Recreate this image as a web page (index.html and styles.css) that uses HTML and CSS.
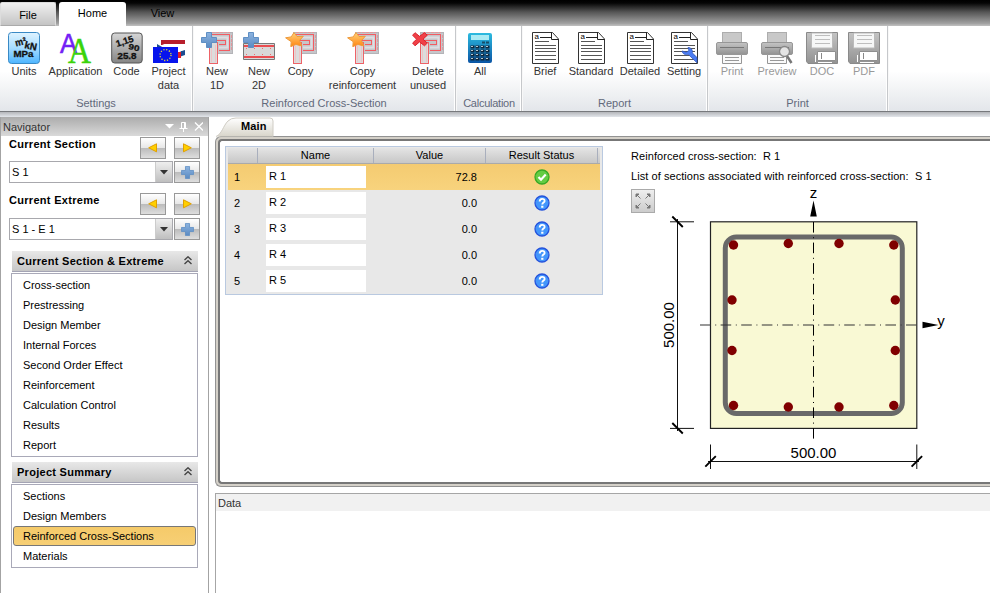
FILE: index.html
```html
<!DOCTYPE html>
<html lang="en">
<head>
<meta charset="utf-8">
<title>Reinforced Cross-Sections</title>
<link rel="stylesheet" href="styles.css">
</head>
<body>
<svg class="defs" width="0" height="0" aria-hidden="true">
  <defs>
    <linearGradient id="blueBtn" x2="0" y2="1"><stop offset="0" stop-color="#dff3ff"/><stop offset=".5" stop-color="#a6dcff"/><stop offset="1" stop-color="#4db5ff"/></linearGradient>
    <linearGradient id="greyBtn" x2="0" y2="1"><stop offset="0" stop-color="#d6d6d6"/><stop offset="1" stop-color="#858585"/></linearGradient>
    <linearGradient id="calc" x2="0" y2="1"><stop offset="0" stop-color="#2cbbe0"/><stop offset="1" stop-color="#0a55a5"/></linearGradient>
    <linearGradient id="printer" x2="0" y2="1"><stop offset="0" stop-color="#c4c4c4"/><stop offset="1" stop-color="#929292"/></linearGradient>
    <linearGradient id="plusFill" x2="0" y2="1"><stop offset="0" stop-color="#8db4e0"/><stop offset="1" stop-color="#5a8ac2"/></linearGradient>
    <linearGradient id="starFill" x2="0" y2="1"><stop offset="0" stop-color="#ffd27a"/><stop offset="1" stop-color="#ff8410"/></linearGradient>
    <symbol id="beam" viewBox="0 0 32 32">
      <rect x="8.500" y=".5" width="23" height="21" fill="#c6c6ca" stroke="#b4b4b8"/>
      <path d="M11 2.500h18M28.500 3v16M18 18.500h11M9 8.500h15M18 12.500h7M24.500 8v5" fill="none" stroke="#f25c62"/>
      <path d="M12 5.500h14.500v10H18" fill="none" stroke="#dedee2" stroke-width="2"/>
      <path d="M11 .5h18M30.500 3v16" stroke="#e3979b" fill="none" stroke-dasharray="3 1"/>
      <rect x="8.500" y="10.500" width="8" height="21" fill="#dcdcdc" stroke="#ee6267"/>
      <path d="M10.500 13v17M14.500 13v17" stroke="#eec4c6"/>
    </symbol>
    <symbol id="plus" viewBox="0 0 16 16"><path d="M5.500.5h5v5h5v5h-5v5h-5v-5h-5v-5h5z" fill="url(#plusFill)" stroke="#5f8fc4"/></symbol>
    <symbol id="star" viewBox="0 0 19 15"><path d="M9 .5l3 4 6.300-.2-3.800 4.200 2.300 5.500-6-1.600-5 2.300.4-5L.6 5.800l5.600-.9z" fill="url(#starFill)" stroke="#ee9a3c"/></symbol>
    <symbol id="doc" viewBox="0 0 27 32">
      <path d="M.5.5h20L26.500 7v24.500H.5z" fill="#fff" stroke="#333"/>
      <path d="M19.500.5v7h7M8 5.500h11" fill="none" stroke="#222"/>
      <path d="M3 9.500h14M3 13.500h21M3 16.500h21M3 19.500h21M3 23.500h21M3 27.500h21" stroke="#555"/>
      <text x="2.500" y="6.800" font-size="8">a</text>
    </symbol>
    <symbol id="print" viewBox="0 0 32 32">
      <rect x="6.500" y=".5" width="19" height="12" fill="#c8c8c8" stroke="#adadad"/>
      <rect x=".5" y="10.500" width="31" height="12" rx="1.500" fill="url(#printer)" stroke="#979797"/>
      <path d="M4 15.500h24" stroke="#777"/>
      <path d="M6.500 22.500h19v9h-19z" fill="#fafafa" stroke="#969696"/>
      <path d="M9 25.500h14M9 28.500h14" stroke="#999"/>
    </symbol>
    <symbol id="floppy" viewBox="0 0 32 32">
      <path d="M.5.5h31v31H2l-1.500-2z" fill="url(#printer)" stroke="#8a8a8a"/>
      <path d="M5.500 1h21v15h-21z" fill="#f6f7f7" stroke="#bbb"/>
      <path d="M9 3.500h15M9 7.500h15M9 11.500h15" stroke="#bebebe"/>
      <path d="M11.500 19.500h18v9h-18z" fill="#fff" stroke="#8f8f8f"/>
      <path d="M9.500 23v7M12 30.500h14" stroke="#fff"/><path d="M15.500 21v6" stroke="#888"/>
    </symbol>
    <symbol id="ok" viewBox="0 0 16 16"><circle cx="8" cy="8" r="7" fill="#65cc43" stroke="#36a925" stroke-width="1.300"/><path d="M4.500 8l2.500 2.700 4.700-5.200" fill="none" stroke="#fff" stroke-width="2.200"/></symbol>
    <symbol id="ask" viewBox="0 0 16 16"><circle cx="8" cy="8" r="7" fill="#4396fb" stroke="#2553dc" stroke-width="1.300"/><path d="M5.700 6.500c0-3.500 4.900-3.300 4.900-.6 0 1.700-2.300 1.700-2.300 3.600" fill="none" stroke="#fff" stroke-width="1.900"/><path d="M7.200 10.800h2.200v2H7.200z" fill="#fff"/></symbol>
    <symbol id="chev" viewBox="0 0 8 9"><path d="M.5 4L4 .8 7.500 4M.5 8L4 4.800 7.500 8" fill="none" stroke="#444" stroke-width="1.400"/></symbol>
  </defs>
</svg>

<nav class="tabs">
  <div class="tab file">File</div>
  <div class="tab home">Home</div>
  <div class="tab view">View</div>
</nav>

<header class="ribbon">
  <section class="group g-settings">
    <div class="tools">
      <div class="tool w40"><svg width="32" height="32"><rect x=".5" y=".5" width="31" height="31" rx="3" fill="url(#blueBtn)" stroke="#3989c5"/><g class="heavy" fill="#111"><text x="8" y="14.500" font-size="10" transform="rotate(-14 8 14)" textLength="11" lengthAdjust="spacingAndGlyphs">m²</text><text x="16" y="16" font-size="10" transform="rotate(12 16 16)" textLength="12.500" lengthAdjust="spacingAndGlyphs">kN</text><text x="5.500" y="25" font-size="9" textLength="20" lengthAdjust="spacingAndGlyphs">MPa</text></g></svg><span>Units</span></div>
      <div class="tool w63"><svg class="letters" width="32" height="32"><text x="0" y="20.500" font-size="28" textLength="17" lengthAdjust="spacingAndGlyphs" fill="#7320f5" stroke="#7320f5" stroke-width=".6">A</text><text class="serif" x="8" y="31" font-size="35" textLength="23" lengthAdjust="spacingAndGlyphs" fill="#3ad30a" stroke="#3ad30a" stroke-width=".5">A</text></svg><span>Application</span></div>
      <div class="tool w39"><svg width="32" height="32"><rect x=".7" y="1" width="30.500" height="30" rx="3" fill="url(#greyBtn)" stroke="#555"/><g class="heavy" fill="#111"><text x="6" y="15" font-size="9" transform="rotate(-18 6 15)" textLength="18" lengthAdjust="spacingAndGlyphs">1,15</text><text x="17" y="17" font-size="8" transform="rotate(12 17 17)" textLength="11" lengthAdjust="spacingAndGlyphs">90</text><text x="6.500" y="26.500" font-size="8.500" textLength="19" lengthAdjust="spacingAndGlyphs">25.8</text></g></svg><span>Code</span></div>
      <div class="tool w45"><svg width="32" height="32"><path d="M8 8h24v5H8z" fill="#b71e2c"/><path d="M4 12l6 3.500H4zM26 20l6-3v6l-6 2z" fill="#1d4d91"/><path d="M9 12h23v6l-7 2v8h3v-8" fill="#fff"/><path d="M25 20h3v6h-3z" fill="#e21b25"/><path d="M28 19h4v4h-4z" fill="#1d4d91"/><path d="M0 15h25v16H0z" fill="#0714ed"/><circle cx="12.500" cy="23" r="5.500" fill="none" stroke="#e8df30" stroke-width="1.300" stroke-dasharray="1.200 1.680"/></svg><span>Project<br>data</span></div>
    </div>
    <h2>Settings</h2>
  </section>
  <section class="group g-rcs">
    <div class="tools">
      <div class="tool w42"><svg width="32" height="32"><use href="#beam" width="32" height="32"/><use href="#plus" width="16" height="16"/></svg><span>New<br>1D</span></div>
      <div class="tool w42"><svg width="32" height="32"><path d="M.5 11.500h31v16H.5z" fill="#d8d8d8" stroke="#777"/><path d="M1 14h30M1 25h30" stroke="#f01f25" stroke-width="1.300"/><path d="M1 16.500h30M1 22.500h30" stroke="#f06a6c" stroke-dasharray="1 7" stroke-dashoffset="-2"/><use href="#plus" width="16" height="16"/></svg><span>New<br>2D</span></div>
      <div class="tool w41"><svg width="32" height="32"><use href="#beam" width="32" height="32"/><use href="#star" width="19" height="15"/></svg><span>Copy</span></div>
      <div class="tool w83"><svg width="32" height="32"><use href="#beam" width="32" height="32"/><use href="#star" width="19" height="15"/></svg><span>Copy<br>reinforcement</span></div>
      <div class="tool w48"><svg width="32" height="32"><use href="#beam" width="32" height="32"/><path d="M3 .7l4.500 3.600L12.500.7l2.800 2.500L11 7.200l4.300 3.900-2.800 2.700-5-3.900L3 13.800.6 11l4-3.700L.6 3.200z" fill="#f04047" stroke="#d9252e"/></svg><span>Delete<br>unused</span></div>
    </div>
    <h2>Reinforced Cross-Section</h2>
  </section>
  <section class="group g-calc">
    <div class="tools">
      <div class="tool w40"><svg width="24" height="32"><rect y="1" width="24" height="30" rx="2" fill="url(#calc)"/><path d="M3 3h18v5H3z" fill="#a9eaf4"/><path d="M14 10.500h7" stroke="#174d68" stroke-width="2" stroke-dasharray="3 1"/><path d="M2.500 15h19M2.500 19h19M2.500 23h19M2.500 27h19" stroke="#10283d" stroke-width="3" stroke-dasharray="4 1"/><path d="M3 14.500h18M3 18.500h18M3 22.500h18M3 26.500h18" stroke="#b8c7cf" stroke-dasharray="2 3"/></svg><span>All</span></div>
    </div>
    <h2>Calculation</h2>
  </section>
  <section class="group g-report">
    <div class="tools">
      <div class="tool w40"><svg width="27" height="32"><use href="#doc"/></svg><span>Brief</span></div>
      <div class="tool w52"><svg width="27" height="32"><use href="#doc"/></svg><span>Standard</span></div>
      <div class="tool w46"><svg width="27" height="32"><use href="#doc"/></svg><span>Detailed</span></div>
      <div class="tool w42"><svg width="27" height="32"><use href="#doc"/><path d="M17 15.500c3 0 5 2.500 4.200 5.300L26 25.500v5.300l-8.500-8.200c-3.200.9-6-.9-6.500-3.600l4.500 1.200 2.500-1.800z" fill="#4b7df3" stroke="#2f55bb" stroke-width=".8"/></svg><span>Setting</span></div>
    </div>
    <h2>Report</h2>
  </section>
  <section class="group g-print">
    <div class="tools disabled">
      <div class="tool w48"><svg width="32" height="32"><use href="#print"/></svg><span>Print</span></div>
      <div class="tool w42"><svg width="32" height="32"><use href="#print"/><path d="M26 24l4.500 7" stroke="#777" stroke-width="2.500"/><circle cx="23.500" cy="19.500" r="5" fill="#e4e4e4" stroke="#888" stroke-width="1.300"/></svg><span>Preview</span></div>
      <div class="tool w48"><svg width="32" height="32"><use href="#floppy"/></svg><span>DOC</span></div>
      <div class="tool w36"><svg width="32" height="32"><use href="#floppy"/></svg><span>PDF</span></div>
    </div>
    <h2>Print</h2>
  </section>
</header>
<div class="ribbon-shadow"></div>

<div class="workspace">
  <aside class="navigator">
    <div class="nav-title"><span>Navigator</span>
      <svg width="38" height="12"><path d="M0 3h9l-4.500 4.500z" fill="#fff"/><path d="M16.500 1.500h4v6h-4zM14.500 7.500h8M18.500 8v3" fill="none" stroke="#fff"/><path d="M19.500 2v5" stroke="#fff"/><path d="M30 1.500l8 8M38 1.500l-8 8" stroke="#fff" stroke-width="1.300"/></svg>
    </div>
    <div class="picker">
      <div class="picker-head"><b>Current Section</b>
        <button class="btn"><svg width="10" height="10"><path d="M8.500.8v8L.7 4.800z" fill="#ffcf00" stroke="#e0a000"/></svg></button>
        <button class="btn"><svg width="10" height="10"><path d="M1.500.8v8l7.800-4z" fill="#ffcf00" stroke="#e0a000"/></svg></button>
      </div>
      <div class="picker-row"><div class="combo"><span>S 1</span><i><svg width="8" height="5"><path d="M0 0h8L4 4.500z" fill="#333"/></svg></i></div>
        <button class="btn"><svg width="13" height="13"><use href="#plus"/></svg></button></div>
    </div>
    <div class="picker">
      <div class="picker-head"><b>Current Extreme</b>
        <button class="btn"><svg width="10" height="10"><path d="M8.500.8v8L.7 4.800z" fill="#ffcf00" stroke="#e0a000"/></svg></button>
        <button class="btn"><svg width="10" height="10"><path d="M1.500.8v8l7.800-4z" fill="#ffcf00" stroke="#e0a000"/></svg></button>
      </div>
      <div class="picker-row"><div class="combo"><span>S 1 - E 1</span><i><svg width="8" height="5"><path d="M0 0h8L4 4.500z" fill="#333"/></svg></i></div>
        <button class="btn"><svg width="13" height="13"><use href="#plus"/></svg></button></div>
    </div>
    <div class="accordion">
      <h3>Current Section &amp; Extreme<svg width="8" height="9"><use href="#chev"/></svg></h3>
      <ul>
        <li>Cross-section</li><li>Prestressing</li><li>Design Member</li><li>Internal Forces</li><li>Second Order Effect</li><li>Reinforcement</li><li>Calculation Control</li><li>Results</li><li>Report</li>
      </ul>
    </div>
    <div class="accordion summary">
      <h3>Project Summary<svg width="8" height="9"><use href="#chev"/></svg></h3>
      <ul>
        <li>Sections</li><li>Design Members</li><li class="active">Reinforced Cross-Sections</li><li>Materials</li>
      </ul>
    </div>
  </aside>

  <main class="content">
    <div class="main-tab">
      <svg width="60" height="20"><defs><linearGradient id="tabFill" x2="0" y2="1"><stop offset="0" stop-color="#fff"/><stop offset="1" stop-color="#d8d5ca"/></linearGradient></defs><path d="M1 19.500C7 17 8 9 13 4q3-3 8-3h34q3 0 3 3v15.500" fill="url(#tabFill)" stroke="#cfccc4"/></svg>
      <b>Main</b>
    </div>
    <div class="frame"><div class="panel">
      <div class="grid">
        <div class="row head"><span></span><span>Name</span><span>Value</span><span>Result Status</span><span></span></div>
        <div class="row selected"><span>1</span><span><em>R 1</em></span><span>72.8</span><span><svg width="16" height="16"><use href="#ok"/></svg></span></div>
        <div class="row"><span>2</span><span><em>R 2</em></span><span>0.0</span><span><svg width="16" height="16"><use href="#ask"/></svg></span></div>
        <div class="row"><span>3</span><span><em>R 3</em></span><span>0.0</span><span><svg width="16" height="16"><use href="#ask"/></svg></span></div>
        <div class="row"><span>4</span><span><em>R 4</em></span><span>0.0</span><span><svg width="16" height="16"><use href="#ask"/></svg></span></div>
        <div class="row"><span>5</span><span><em>R 5</em></span><span>0.0</span><span><svg width="16" height="16"><use href="#ask"/></svg></span></div>
      </div>
      <div class="viewer">
        <p>Reinforced cross-section:&nbsp; R 1</p>
        <p class="list">List of sections associated with reinforced cross-section:&nbsp; S 1</p>
        <div class="canvas">
          <button class="fit"><svg width="16" height="16" fill="#777" stroke="#777" stroke-width="1.300"><path d="M1 1h3L1 4zM2 2l3.500 3.500M15 1v3l-3-3zM14 2l-3.500 3.500M1 15v-3l3 3zM2 14l3.500-3.500M15 15h-3l3-3zM14 14l-3.500-3.500" stroke-width="1"/></svg></button>
          <svg class="drawing" width="335" height="289" viewBox="655 186 335 289">
            <rect x="710.500" y="221.800" width="206.300" height="206.600" fill="#f9f9d4" stroke="#222" stroke-width="1.200"/>
            <rect x="725.300" y="237" width="177" height="176.500" rx="11" fill="none" stroke="#696969" stroke-width="5"/>
            <path d="M813.500 222v217" stroke="#000" stroke-dasharray="10.600 4.600 1 4.400"/>
            <path d="M700 325h218" stroke="#333" stroke-width="1.200" stroke-dasharray="10.600 4.600 1 4.400"/>
            <g fill="#800000">
              <circle cx="733.500" cy="245" r="4.700"/><circle cx="788.300" cy="243.500" r="4.700"/><circle cx="839" cy="243.500" r="4.700"/><circle cx="893.800" cy="245" r="4.700"/>
              <circle cx="732" cy="300" r="4.700"/><circle cx="895.300" cy="300" r="4.700"/><circle cx="732" cy="350.500" r="4.700"/><circle cx="895.300" cy="350.500" r="4.700"/>
              <circle cx="733.500" cy="405.500" r="4.700"/><circle cx="788.300" cy="407" r="4.700"/><circle cx="839" cy="407" r="4.700"/><circle cx="893.800" cy="405.500" r="4.700"/>
            </g>
            <path d="M813.500 200.500l3.300 16h-6.600zM938.500 325l-16-3.300v6.600z"/>
            <path d="M677.500 219v212M670 221.800h24M670 428.400h24M708 461.500h211M710.500 444.500V469M916.800 444.500V469" stroke="#111"/>
            <path d="M672.300 216.500l10.500 10.500M672.300 423l10.500 10.500M705.300 466.700l10.500-10.500M911.600 466.700l10.500-10.500" stroke="#000" stroke-width="1.900"/>
            <g font-size="15" text-anchor="middle"><text x="813.500" y="458">500.00</text><text transform="translate(674 325) rotate(-90)">500.00</text><text x="813.500" y="198">z</text><text x="941" y="325.500">y</text></g>
          </svg>
        </div>
      </div>
    </div></div>
    <section class="data"><h4>Data</h4></section>
  </main>
</div>
</body>
</html>
```
FILE: styles.css
```css
* { box-sizing: border-box; margin: 0; padding: 0; }
body { width: 990px; height: 593px; overflow: hidden; background: #fff; color: #000; font: 11px/14px "Liberation Sans", Arial, sans-serif; }
svg { display: block; flex: none; }
svg text { font-family: "Liberation Sans", Arial, sans-serif; }
svg .heavy text { font-weight: bold; stroke: #111; stroke-width: .3; }
svg text.serif { font-family: "Liberation Serif", serif; }
.letters { overflow: visible; }
.defs { position: absolute; }
button { font: inherit; }

.tabs { height: 26px; display: flex; align-items: flex-end; background: linear-gradient(#000 0, #050505 3px, #555 12px, #a5a5a5 24px, #bbb 25px); }
.tab { text-align: center; }
.file { width: 56px; height: 24px; margin-right: 3px; padding-top: 5px; border: 1px solid #ddd; border-bottom-color: #aaa; border-radius: 2px 2px 0 0; background: linear-gradient(#f0f0f0, #c4c4c4); }
.home { width: 67px; height: 24px; padding-top: 4px; border-radius: 3px 3px 0 0; background: #fff; }
.view { width: 73px; height: 24px; padding-top: 4px; }

.ribbon { height: 85px; display: flex; background: linear-gradient(#fff 0, #fff 45px, #e3e6ea 85px); }
.group { height: 85px; border-right: 1px solid #c6c8cb; box-shadow: inset -1px 0 #fff, 1px 0 #f8f8f8; }
.g-settings { width: 193px; } .g-settings .tools { padding-left: 4px; }
.g-rcs { width: 263px; } .g-rcs .tools { padding-left: 3px; }
.g-calc { width: 66px; } .g-calc .tools { padding-left: 4px; }
.g-report { width: 186px; } .g-report .tools { padding-left: 3px; }
.g-print { width: 180px; }
.tools { height: 70px; display: flex; padding-top: 6px; }
.tool { display: flex; flex-direction: column; align-items: center; text-align: center; color: #333; white-space: nowrap; }
.disabled .tool { color: #999; }
.w36 { width: 36px; } .w39 { width: 39px; } .w40 { width: 40px; } .w41 { width: 41px; } .w42 { width: 42px; } .w45 { width: 45px; }
.w46 { width: 46px; } .w48 { width: 48px; } .w52 { width: 52px; } .w63 { width: 63px; } .w83 { width: 83px; }
.group h2 { font-size: 11px; font-weight: normal; line-height: 14px; text-align: center; color: #62697b; white-space: nowrap; }
.g-calc h2 { letter-spacing: -.25px; padding-left: 1px; }
.ribbon-shadow { height: 6px; border-top: 1px solid #77797d; background: linear-gradient(#b4b6ba, #e2e5ea); }

.workspace { height: 476px; display: flex; }
.navigator { width: 209px; border: solid #a3a3a3; border-width: 0 1px; }
.nav-title { height: 19px; padding: 1px 5px 0 2px; display: flex; justify-content: space-between; align-items: center; color: #333; background: linear-gradient(#acacac, #d9d9d9); }
.picker { padding: 1px 8px 0; height: 56px; }
.picker + .picker { height: 59px; }
.picker + .picker .picker-head { height: 25px; }
.picker-head { display: flex; height: 24px; gap: 8px; }
.picker b { flex: 1; font-size: 11px; line-height: 14px; letter-spacing: .3px; }
.btn { width: 26px; height: 22px; display: flex; align-items: center; justify-content: center; border: 1px solid #999; background: linear-gradient(#fff 0, #e7e7e7 50%, #bcbcbc 52%, #dedede 100%); }
.picker-row { display: flex; gap: 1px; }
.combo { width: 165px; height: 22px; display: flex; justify-content: space-between; align-items: center; border: 1px solid #a8a8ad; background: #fff; padding-left: 2px; }
.combo i { width: 17px; height: 20px; display: flex; align-items: center; justify-content: center; background: linear-gradient(#eee, #bfbfbf); border-left: 1px solid #ccc; }
.accordion { width: 187px; margin: 0 0 4px 10px; }
.accordion h3 { margin-left: 1px; height: 21px; padding: 0 6px 0 5px; display: flex; justify-content: space-between; align-items: center; font-size: 11px; letter-spacing: .28px; background: linear-gradient(#e8e8e8, #c6c6c6); border-bottom: 1px solid #a4a4b4; }
.accordion h3 svg { position: relative; top: -1px; }
.accordion ul { margin-top: 1px; padding: 1px; border: 1px solid #a9a9b8; list-style: none; }
.accordion li { height: 20px; line-height: 20px; padding-left: 10px; border-radius: 3px; }
.accordion li.active { padding-left: 9px; line-height: 18px; border: 1px solid #777; background: linear-gradient(#f5ca69, #f7cf75); }
.summary { margin-top: 5px; }
.summary h3 { height: 21px; }

.content { width: 781px; padding-left: 6px; position: relative; }
.main-tab { position: absolute; left: 6px; top: 0; width: 60px; height: 20px; z-index: 1; }
.main-tab b { position: absolute; left: 26px; top: 2px; font-size: 11px; letter-spacing: .15px; }
.frame { margin-top: 19px; height: 351px; border: 1px solid #929292; border-right: 0; border-radius: 6px 0 0 6px; padding: 2px 0 2px 2px; background: #d4d0c8; }
.panel { height: 345px; border: 2px solid #777; border-right: 0; border-radius: 4px 0 0 4px; background: #fff; display: flex; overflow: hidden; }
.grid { width: 378px; height: 149px; margin: 5px 0 0 5px; padding: 1px 2px 0; border: 1px solid #b9c9e0; background: #e8e8e8; flex: none; }
.row { display: grid; grid-template-columns: 30px 116px 112px 112px 2px; height: 26px; align-items: center; }
.row.head { height: 16px; background: linear-gradient(#e4e4e4, #c7c7c7); text-align: center; border-bottom: 1px solid #aaa; }
.row span { display: block; }
.row.head span { height: 15px; line-height: 15px; border-right: 1px solid #a9afbd; }
.row.head span:last-child { border: 0; }
.selected { background: linear-gradient(#f4cb71, #f8d37d); }
.row:not(.head) span:nth-child(1) { padding-left: 6px; }
.row:not(.head) span:nth-child(2) { padding-left: 8px; }
.row:not(.head) span:nth-child(3) { text-align: right; padding-right: 9px; }
.row:not(.head) span:nth-child(4) { display: flex; justify-content: center; padding-right: 1px; }
.row em { display: block; width: 100px; height: 22px; padding-left: 3px; line-height: 20px; font-style: normal; background: #fff; }
.viewer { margin-left: 28px; padding-top: 8px; flex: 1; }
.viewer p { line-height: 14px; white-space: nowrap; letter-spacing: .065px; }
.viewer p.list { margin-top: 6px; }
.canvas { display: flex; margin-top: 3px; }
.fit { width: 24px; height: 24px; margin-top: 3px; border: 1px solid #aaa; background: linear-gradient(#eee, #ccc); display: flex; align-items: center; justify-content: center; }
.drawing { overflow: visible; }
.data { margin-top: 6px; height: 100px; border: solid #a6a6a6; border-width: 1px 0 0 1px; }
.data h4 { height: 17px; padding-left: 2px; font-size: 11px; font-weight: normal; line-height: 18px; color: #333; background: #f1f1f1; }
```
